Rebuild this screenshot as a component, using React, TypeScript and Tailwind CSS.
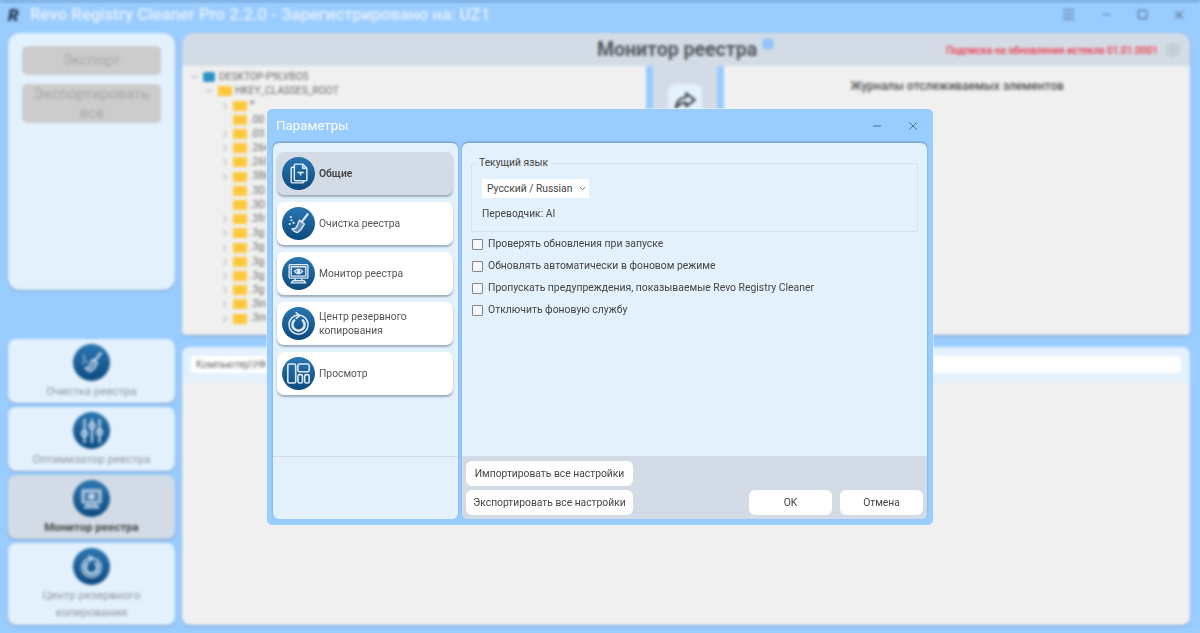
import { ChevronDown, ChevronRight, Minus, Square, X, Menu, Settings } from "lucide-react";

const FONT = "font-['Roboto','Liberation_Sans',sans-serif]";

const TREE = [".00", ".03", ".264", ".265", ".386", ".3D", ".3D", ".3fr", ".3g", ".3g", ".3g", ".3g", ".3g", ".3in", ".3m"];

const Circle = ({ children, size = "w-[33px] h-[33px]" }: { children: React.ReactNode; size?: string }) => (
  <div className={`${size} shrink-0 rounded-full bg-gradient-to-b from-[#2a76b0] to-[#0b4a80] flex items-center justify-center`}>
    {children}
  </div>
);

const DocsIcon = () => (
  <svg width="25" height="25" viewBox="0 0 24 24" fill="none" stroke="#e3eef8" strokeWidth="1.4" strokeLinejoin="round">
    <path d="M9 3h7l4 4v11a1 1 0 0 1-1 1H9a1 1 0 0 1-1-1V4a1 1 0 0 1 1-1z" />
    <path d="M16 3v4h4" />
    <path d="M8 6H6a1 1 0 0 0-1 1v13a1 1 0 0 0 1 1h10a1 1 0 0 0 1-1v-1" />
    <path d="M11 11h6M14 11v3" />
  </svg>
);

const BroomIcon = () => (
  <svg width="26" height="26" viewBox="0 0 24 24" fill="none" stroke="#dfeaf5" strokeWidth="1.3" strokeLinecap="round" strokeLinejoin="round">
    <path d="M20 3l-5.5 7" strokeWidth="2" />
    <path d="M12.5 8.5l4.5 3.5-1 1.5c-1 2.5-3 5-5.5 6.5-2-.5-4-2-5-3.5 2 0 4-1 4.5-2.5 1-2 1.5-3.5 2.5-5.5z" fill="#dfeaf5" fillOpacity="0.35" />
    <path d="M5 8.5h.01M3.5 12h.01M7 11h.01M4.5 5.5h.01" strokeWidth="2" />
  </svg>
);

const MonitorIcon = () => (
  <svg width="25" height="25" viewBox="0 0 24 24" fill="none" stroke="#dfeaf5" strokeWidth="1.3" strokeLinejoin="round">
    <rect x="3" y="3.5" width="18" height="13" rx="1" />
    <rect x="5" y="5.5" width="14" height="9" />
    <path d="M8 10c2.5-3 5.5-3 8 0-2.5 3-5.5 3-8 0z" />
    <circle cx="12" cy="10" r="1.2" fill="#dfeaf5" />
    <path d="M9 16.5l-.5 2.5h7l-.5-2.5M5 21h14l-1.5-2h-11z" />
  </svg>
);

const BackupIcon = () => (
  <svg width="27" height="27" viewBox="0 0 24 24" fill="none" stroke="#dfeaf5" strokeLinecap="round" strokeLinejoin="round">
    <circle cx="12" cy="13" r="8.5" strokeWidth="1.3" />
    <path d="M8.2 9.2A5.4 5.4 0 1 0 15.8 9.2" strokeWidth="2.2" />
    <path d="M10 2.5l3 2.5-3 2.5" strokeWidth="1.5" />
  </svg>
);

const LayoutIcon = () => (
  <svg width="27" height="27" viewBox="0 0 24 24" fill="none" stroke="#dfeaf5" strokeWidth="1.4">
    <rect x="2.5" y="3.5" width="7" height="17" rx="1.5" />
    <rect x="11.5" y="3.5" width="10" height="7" rx="1.5" />
    <rect x="11.5" y="13" width="4" height="7.5" rx="1.5" />
    <rect x="17.5" y="13" width="4" height="7.5" rx="1.5" />
  </svg>
);

const SlidersIcon = () => (
  <svg width="30" height="30" viewBox="0 0 24 24" fill="none" stroke="#dfeaf5" strokeWidth="1.5" strokeLinecap="round">
    <path d="M6 3v18M12 3v18M18 3v18" />
    <circle cx="6" cy="14" r="2" fill="#2a75ad" />
    <circle cx="12" cy="8" r="2" fill="#2a75ad" />
    <circle cx="18" cy="13" r="2" fill="#2a75ad" />
  </svg>
);

const ForwardIcon = () => (
  <svg width="26" height="26" viewBox="0 0 24 24" fill="none" stroke="#3f4448" strokeWidth="2" strokeLinejoin="round">
    <path d="M13 5l8 6-8 6v-3.5c-4 0-7 1.5-9.500 5 .5-5.500 3.500-9.500 9.500-10z" />
  </svg>
);

const SIDE = [
  { label: "Очистка реестра", icon: <BroomIcon />, box: "h-[64px]" },
  { label: "Оптимизатор реестра", icon: <SlidersIcon />, box: "h-[64px]" },
  { label: "Монитор реестра", icon: <MonitorIcon />, box: "h-[64px]", active: true },
  { label: "Центр резервного копирования", icon: <BackupIcon />, box: "h-[82px]" },
];

const NAV = [
  { label: "Общие", icon: <DocsIcon />, active: true },
  { label: "Очистка реестра", icon: <BroomIcon /> },
  { label: "Монитор реестра", icon: <MonitorIcon /> },
  { label: "Центр резервного копирования", icon: <BackupIcon /> },
  { label: "Просмотр", icon: <LayoutIcon /> },
];

const OPTIONS = [
  "Проверять обновления при запуске",
  "Обновлять автоматически в фоновом режиме",
  "Пропускать предупреждения, показываемые Revo Registry Cleaner",
  "Отключить фоновую службу",
];

const Background = () => (
  <div className="w-full h-full flex flex-col blur-[1.4px] border-t-2 border-[#6a9cc9]">
    <div className="h-[31px] shrink-0 flex items-center pl-[8px] pr-[14px] pb-[6px]">
      <span className="w-[14px] h-[18px] text-[17px] leading-[18px] font-black italic text-[#24384f] mr-[8px]">R</span>
      <span className="text-[16.8px] font-medium text-[#e8f3ff]">Revo Registry Cleaner Pro 2.2.0 - Зарегистрировано на: UZ1</span>
      <div className="ml-auto flex items-center gap-[24px] text-[#56708c]">
        <Menu size={15} />
        <Minus size={13} />
        <Square size={11} strokeWidth={2.5} />
        <X size={14} />
      </div>
    </div>
    <div className="flex-1 flex gap-[7px] pl-[8px] pr-[10px] pb-[8px]">
      <div className="w-[167px] flex flex-col">
        <div className="h-[257px] rounded-[12px] bg-[#e3f1fd] px-[14px] pt-[13px] flex flex-col gap-[9px] shadow-[0_1px_2px_rgba(70,90,110,0.45)]">
          <div className="h-[29px] rounded-[5px] bg-[#cccccc] text-[#a6a6a6] text-[15px] flex items-center justify-center">Экспорт</div>
          <div className="h-[39px] rounded-[5px] bg-[#cccccc] text-[#a6a6a6] text-[15px] leading-[19px] flex items-center justify-center text-center px-[14px]">Экспортировать все</div>
        </div>
        <div className="mt-[49px] flex flex-col gap-[4px]">
          {SIDE.map((s) => (
            <div
              key={s.label}
              className={`${s.box} rounded-[8px] flex flex-col items-center pt-[5px] shadow-[0_1px_2px_rgba(70,90,110,0.5)] ${s.active ? "bg-[#d3dce6]" : "bg-[#e3f1fd]"}`}
            >
              <Circle size="w-[37px] h-[37px]">{s.icon}</Circle>
              <span className={`text-[11.5px] leading-[17px] mt-[2px] text-center px-[8px] ${s.active ? "font-bold text-[#444]" : "text-[#8b939b]"}`}>{s.label}</span>
            </div>
          ))}
        </div>
      </div>
      <div className="flex-1 flex flex-col">
        <div className="h-[302px] rounded-t-[12px] rounded-b-[4px] overflow-hidden flex flex-col shadow-[0_1px_2px_rgba(70,90,110,0.45)]">
          <div className="h-[33px] shrink-0 bg-[#d3dce6] flex items-center relative">
            <div className="w-full text-center text-[19.5px] font-bold text-[#55595e] pr-[18px]">Монитор реестра</div>
            <span className="absolute left-[580px] top-[5px] w-[12px] h-[12px] rounded-full bg-[#8fc3f7]" />
            <span className="absolute right-[32px] top-[10px] text-[10px] text-[#ee3a4b] font-medium">Подписка на обновления истекла 01.01.0001</span>
            <Settings size={16} className="absolute right-[9px] top-[9px] text-[#b3bbc3]" />
          </div>
          <div className="flex-1 flex">
            <div className="w-[464px] bg-[#f0f0f0] pl-[6px] pt-[4px] text-[10.2px] text-[#666] leading-[14.2px] overflow-hidden">
              <div className="flex items-center gap-[3px]">
                <ChevronDown size={12} className="text-[#999]" />
                <span className="w-[12px] h-[10px] rounded-[2px] bg-[#2b93c4]" />
                <span className="ml-[1px]">DESKTOP-P9LVBO5</span>
              </div>
              <div className="flex items-center gap-[3px] ml-[15px]">
                <ChevronDown size={12} className="text-[#999]" />
                <span className="w-[14px] h-[10px] rounded-[1px] bg-[#fdc83c]" />
                <span>HKEY_CLASSES_ROOT</span>
              </div>
              {["*", ...TREE].map((t, i) => (
                <div key={i} className="flex items-center gap-[2px] ml-[31px]">
                  {i === 1 || i === 6 || i === 7 ? <span className="w-[12px]" /> : <ChevronRight size={12} className="text-[#999]" />}
                  <span className="w-[14px] h-[10px] rounded-[1px] bg-[#fdc83c]" />
                  <span className="ml-[1px]">{t}</span>
                </div>
              ))}
            </div>
            <div className="w-[7px] bg-[#99ccff]" />
            <div className="w-[64px] bg-[#d3dce6] flex justify-center pt-[18px]">
              <div className="w-[34px] h-[34px] rounded-[8px] bg-[#e3f1fd] flex items-center justify-center">
                <ForwardIcon />
              </div>
            </div>
            <div className="w-[7px] bg-[#99ccff]" />
            <div className="flex-1 bg-[#f0f0f0] text-center pt-[11px] text-[12px] font-medium text-[#555]">Журналы отслеживаемых элементов</div>
          </div>
        </div>
        <div className="mt-[12px] flex-1 rounded-[8px] bg-[#f0f0f0] overflow-hidden shadow-[0_1px_2px_rgba(70,90,110,0.45)]">
          <div className="h-[36px] bg-[#e3f1fd] px-[9px] pt-[9px]">
            <div className="h-[17px] rounded-[3px] bg-white text-[10px] leading-[17px] px-[5px] text-[#666]">
              <div className="w-[70px] overflow-hidden whitespace-nowrap">Компьютер\HKEY</div>
            </div>
          </div>
        </div>
      </div>
    </div>
  </div>
);

const Btn = ({ children, className }: { children: React.ReactNode; className: string }) => (
  <button className={`h-[25px] rounded-[6px] bg-white text-[10.3px] text-[#444] flex items-center justify-center ${className}`}>{children}</button>
);

export default function App() {
  return (
    <div className={`${FONT} relative w-[1200px] h-[633px] bg-[#99ccff] overflow-hidden`}>
      <Background />
      <div className="absolute left-[267px] top-[109px] w-[666px] h-[416px] rounded-[5px] bg-[#99ccff] flex flex-col shadow-[0_0_0_1px_rgba(235,243,250,0.6)]">
        <div className="h-[34px] shrink-0 flex items-center pl-[9px] pr-[13px] text-white text-[13.3px]">
          <span>Параметры</span>
          <Minus size={12} strokeWidth={1.5} className="ml-auto mr-[23px] text-[#33495f]" />
          <X size={14} strokeWidth={1.2} className="text-[#33495f]" />
        </div>
        <div className="flex-1 flex gap-[4px] px-[6px] pb-[6px]">
          <div className="w-[185px] rounded-[6px] bg-[#e3f1fd] flex flex-col shadow-[0_-1px_2px_rgba(70,90,110,0.5)]">
            <div className="h-[314px] border-b border-[#d3dce6] pl-[4px] pr-[5px] pt-[9px] flex flex-col gap-[7px]">
              {NAV.map((n) => (
                <div
                  key={n.label}
                  className={`h-[43px] rounded-[7px] flex items-center pl-[5px] gap-[4px] shadow-[0_2px_2px_rgba(70,90,110,0.45)] ${n.active ? "bg-[#d3dce6]" : "bg-white"}`}
                >
                  <Circle>{n.icon}</Circle>
                  <span className={`text-[10.3px] leading-[14px] w-[110px] pt-[1px] ${n.active ? "font-semibold text-[#444]" : "text-[#555]"}`}>{n.label}</span>
                </div>
              ))}
            </div>
          </div>
          <div className="flex-1 rounded-[6px] overflow-hidden bg-[#e3f1fd] flex flex-col shadow-[0_-1px_2px_rgba(70,90,110,0.5)]">
            <div className="flex-1 px-[9px] pt-[20px]">
              <div className="relative h-[69px] border border-[#d3e2ef] rounded-[2px] pl-[10px] pt-[15px]">
                <span className="absolute left-[4px] -top-[8px] bg-[#e3f1fd] px-[3px] text-[10.3px] leading-[14px] text-[#444]">Текущий язык</span>
                <div className="w-[107px] h-[19px] bg-white flex items-center pl-[5px] text-[10.3px] text-[#444] whitespace-nowrap">
                  Русский / Russian
                  <ChevronDown size={9} className="ml-[6px] text-[#444]" />
                </div>
                <div className="mt-[9px] text-[10.3px] leading-[14px] text-[#444]">Переводчик: AI</div>
              </div>
              <div className="mt-[5px] flex flex-col gap-[8px]">
                {OPTIONS.map((o) => (
                  <label key={o} className="flex items-center gap-[5px] ml-[1px] h-[14px] text-[10.4px] text-[#444]">
                    <span className="w-[11px] h-[11px] bg-[#f5f8fb] border border-[#858585] rounded-[1px]" />
                    {o}
                  </label>
                ))}
              </div>
            </div>
            <div className="h-[63px] shrink-0 bg-[#d3dce6] px-[4px] pt-[5px] flex">
              <div className="flex flex-col gap-[4px]">
                <Btn className="w-[167px]">Импортировать все настройки</Btn>
                <Btn className="w-[167px]">Экспортировать все настройки</Btn>
              </div>
              <div className="ml-auto flex items-end gap-[8px] pb-[4px]">
                <Btn className="w-[83px]">OK</Btn>
                <Btn className="w-[83px]">Отмена</Btn>
              </div>
            </div>
          </div>
        </div>
      </div>
    </div>
  );
}
